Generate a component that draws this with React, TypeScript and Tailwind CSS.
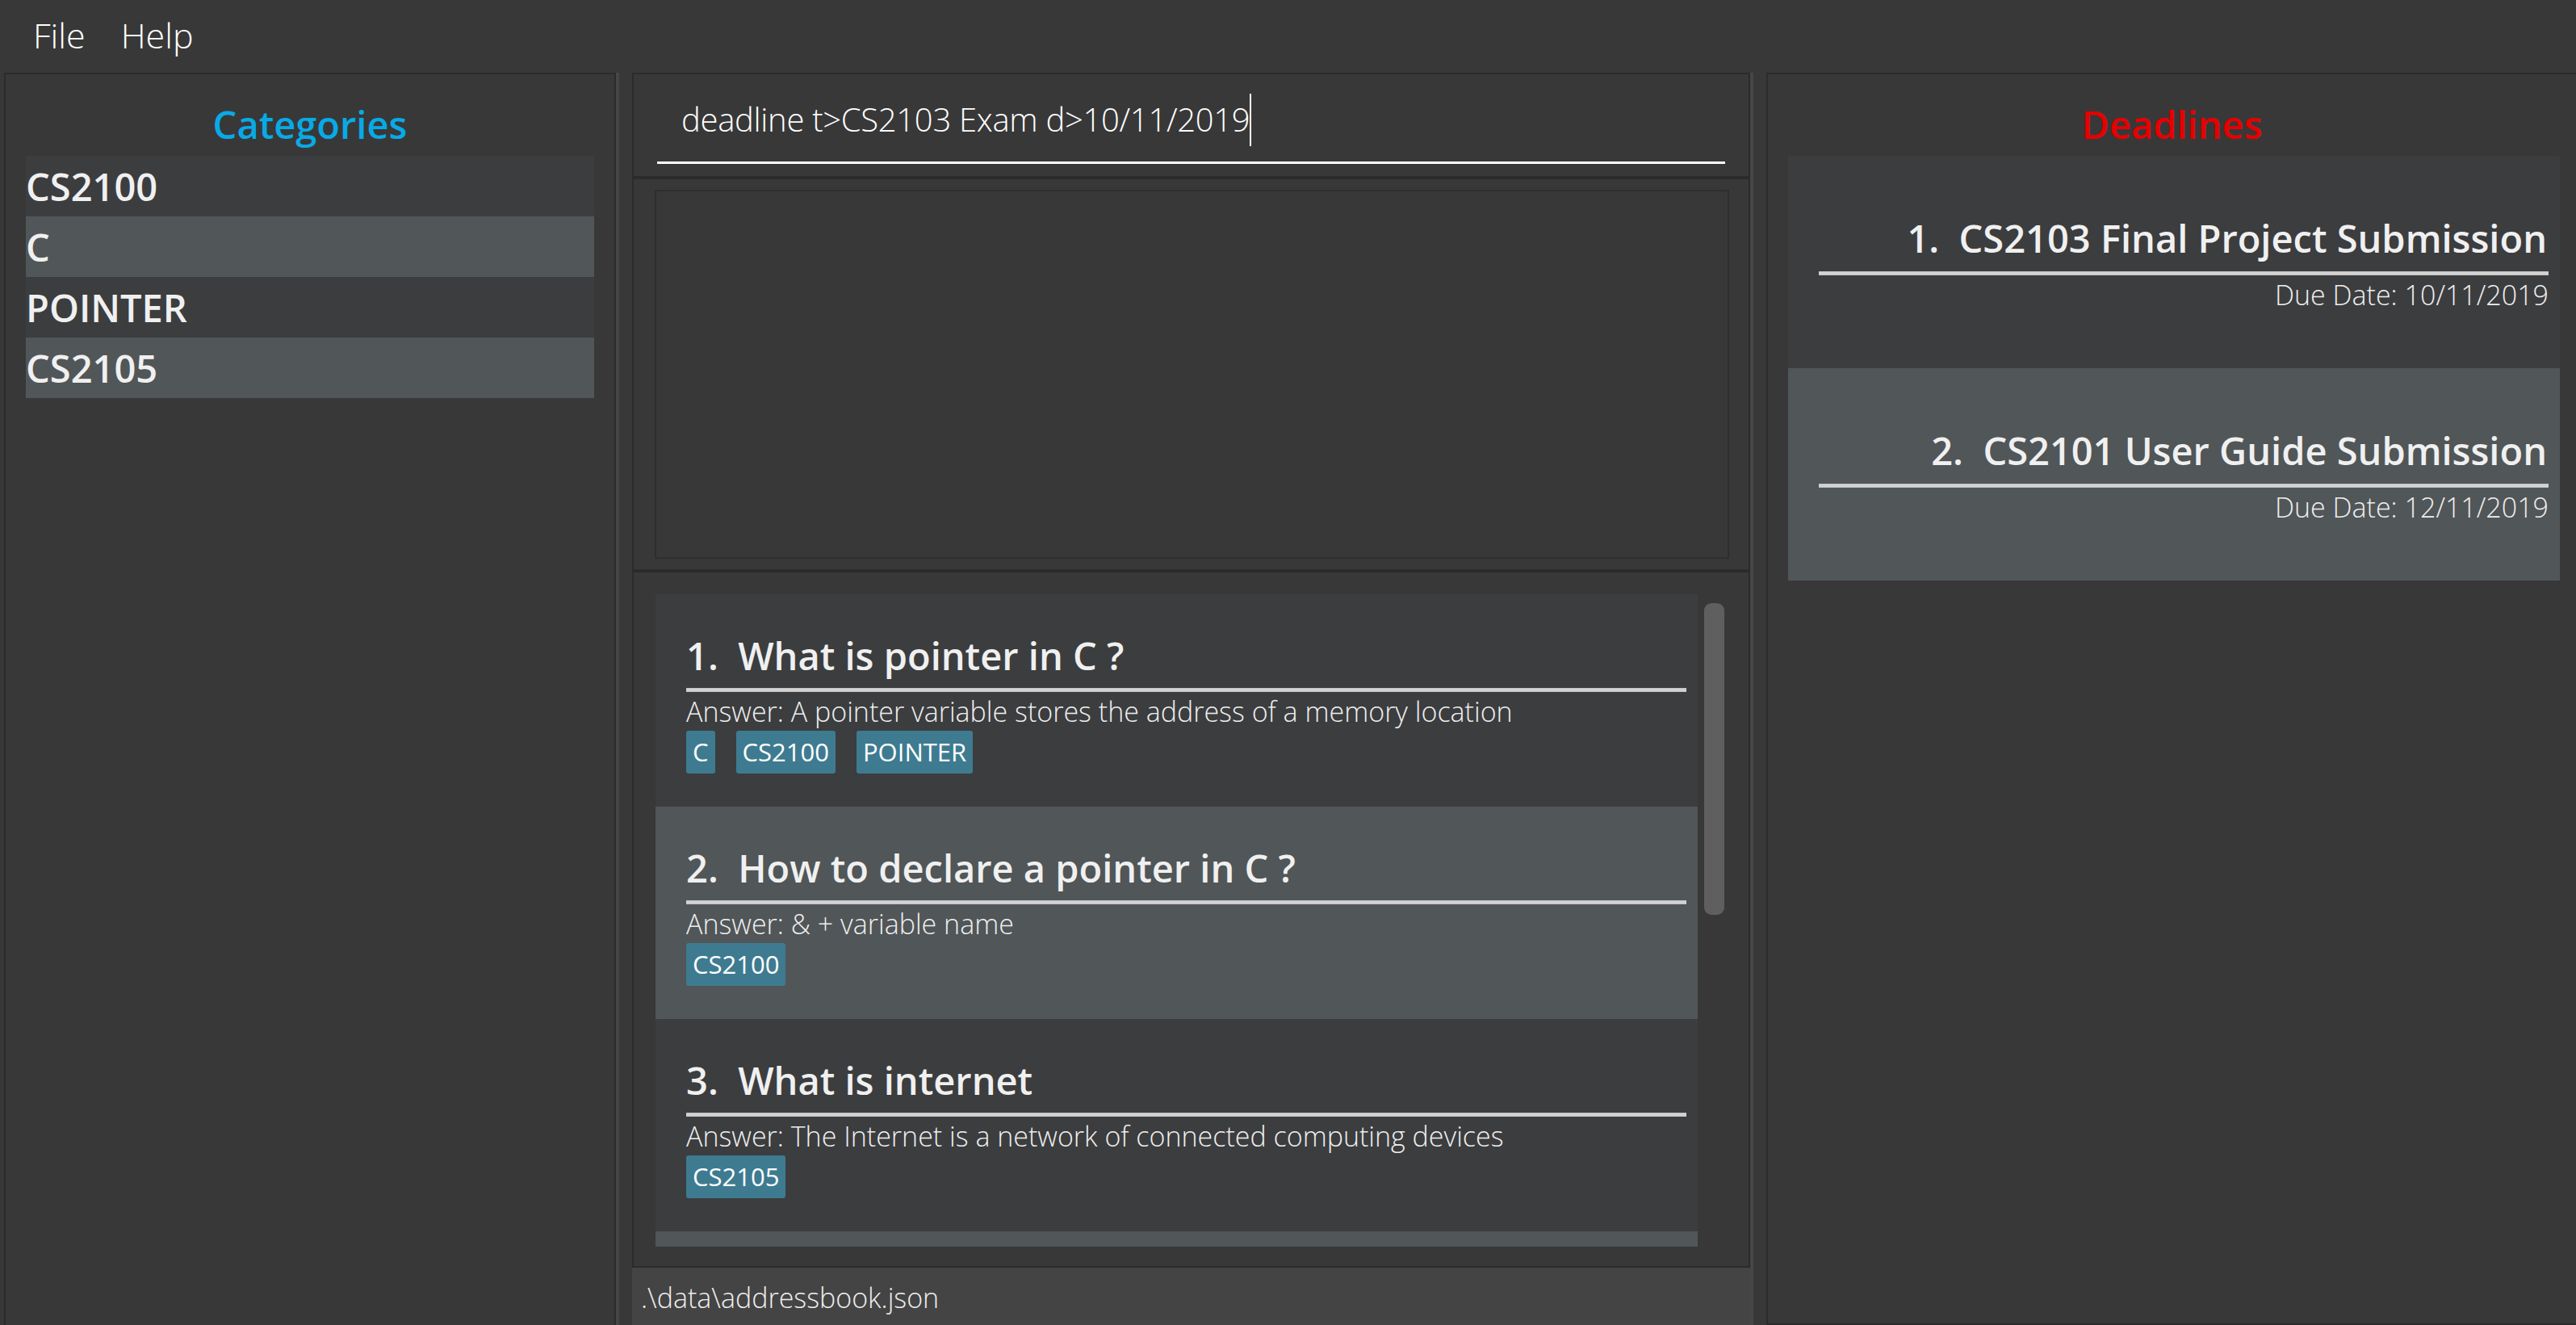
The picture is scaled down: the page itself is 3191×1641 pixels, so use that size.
const categories = ["CS2100", "C", "POINTER", "CS2105"]

const flashcards = [
  {
    question: "What is pointer in C ?",
    answer: "A pointer variable stores the address of a memory location",
    tags: ["C", "CS2100", "POINTER"],
  },
  {
    question: "How to declare a pointer in C ?",
    answer: "& + variable name",
    tags: ["CS2100"],
  },
  {
    question: "What is internet",
    answer: "The Internet is a network of connected computing devices",
    tags: ["CS2105"],
  },
]

const deadlines = [
  { title: "CS2103 Final Project Submission", due: "10/11/2019" },
  { title: "CS2101 User Guide Submission", due: "12/11/2019" },
]

function Rule() {
  // double light line under card titles
  return <div className="h-[5px] bg-[#d2d2d2] border-y border-[#c4c4c4]" />
}

function FlashcardCard({ index, card }: { index: number; card: (typeof flashcards)[number] }) {
  const shade = index % 2 === 0 ? "bg-[#3c3d3f]" : "bg-[#515658]"
  return (
    <div className={`${shade} h-[263px] shrink-0 pl-[38px] pr-[14px] flex flex-col`}>
      <div className="mt-[52px] h-[48px] text-[47px] leading-[48px] font-semibold text-[#f0f0f0] whitespace-nowrap">
        {index + 1}.&nbsp;&nbsp;{card.question}
      </div>
      <div className="mt-[16px]">
        <Rule />
      </div>
      <div className="mt-[8px] h-[33px] text-[34px] leading-[33px] font-light text-[#eeeeee] whitespace-nowrap">
        Answer: {card.answer}
      </div>
      <div className="mt-[7px] flex gap-[26px]">
        {card.tags.map((t) => (
          <span
            key={t}
            className="h-[53px] px-[8px] rounded-[3px] bg-[#3e7b91] text-[31px] text-white flex items-center"
          >
            {t}
          </span>
        ))}
      </div>
    </div>
  )
}

function DeadlineCard({ index, item }: { index: number; item: (typeof deadlines)[number] }) {
  const shade = index % 2 === 0 ? "bg-[#3c3d3f]" : "bg-[#515658]"
  return (
    <div className={`${shade} h-[263px] pl-[38px] pr-[14px] flex flex-col text-right`}>
      <div className="mt-[78px] h-[48px] pr-[2px] text-[47px] leading-[48px] font-semibold text-[#f0f0f0] whitespace-nowrap">
        {index + 1}.&nbsp;&nbsp;{item.title}
      </div>
      <div className="mt-[17px]">
        <Rule />
      </div>
      <div className="mt-[7px] h-[35px] text-[34px] leading-[35px] font-light text-[#eeeeee] whitespace-nowrap">
        Due Date: {item.due}
      </div>
    </div>
  )
}

export default function App() {
  return (
    <div
      className="w-[3191px] h-[1641px] bg-[#383838] flex flex-col overflow-hidden text-white"
      style={{ fontFamily: '"Open Sans", "Noto Sans", sans-serif' }}
    >
      {/* menu bar */}
      <div className="h-[90px] shrink-0 flex items-center pl-[41px] gap-[44px] pb-[2px] text-[43px] font-light text-white">
        <span>File</span>
        <span>Help</span>
      </div>

      <div className="flex-1 min-h-0 flex pl-[5px]">
        {/* categories */}
        <div className="w-[758px] shrink-0 border-2 border-b-0 border-[#2b2b2b] flex flex-col">
          <div className="h-[101px] pt-[23px] flex items-center justify-center text-[47px] leading-[50px] font-semibold text-[#08aae6]">
            Categories
          </div>
          <div className="px-[25px] flex flex-col">
            {categories.map((c, i) => (
              <div
                key={c}
                className={`${i % 2 === 0 ? "bg-[#3c3d3f]" : "bg-[#515658]"} h-[75px] flex items-center text-[47px] leading-[48px] font-semibold text-[#f0f0f0]`}
              >
                {c}
              </div>
            ))}
          </div>
        </div>
        <div className="w-[4px] shrink-0 bg-[#464646]" />

        {/* centre column */}
        <div className="ml-[16px] w-[1385px] shrink-0 flex flex-col">
          <div className="h-[130px] shrink-0 border-2 border-[#2b2b2b] px-[29px] flex flex-col">
            <div className="h-[111px] border-b-[3px] border-white flex items-center pl-[30px] pt-[4px]">
              <span className="text-[40px] leading-[44px] tracking-[-0.3px] font-light text-white whitespace-nowrap">
                deadline t&gt;CS2103 Exam d&gt;10/11/2019
              </span>
              <span className="w-[2px] h-[65px] bg-white" />
            </div>
          </div>

          <div className="h-[487px] shrink-0 border-2 border-[#2b2b2b] pl-[26px] pr-[24px] py-[13px]">
            <div className="h-full border-2 border-[#2e2e2e] bg-[#383838]" />
          </div>

          <div className="h-[863px] shrink-0 border-2 border-[#2b2b2b] pl-[27px] pt-[27px] pb-[24px] flex overflow-hidden">
            <div className="w-[1291px] shrink-0 flex flex-col overflow-hidden">
              {flashcards.map((card, i) => (
                <FlashcardCard key={card.question} index={i} card={card} />
              ))}
              {/* next card, scrolled out of view */}
              <div className="h-[263px] shrink-0 bg-[#515658]" />
            </div>
            <div className="ml-[8px] w-[25px] shrink-0 pt-[11px]">
              <div className="h-[386px] rounded-[9px] bg-[#5f5f5f]" />
            </div>
          </div>

          <div className="flex-1 bg-[#444444] flex items-center pl-[11px] pt-[4px] text-[34px] font-light text-[#eeeeee]">
            .\data\addressbook.json
          </div>
        </div>
        <div className="w-[4px] shrink-0 bg-[#464646]" />

        {/* deadlines */}
        <div className="ml-[16px] flex-1 border-2 border-r-0 border-[#2b2b2b] flex flex-col">
          <div className="h-[101px] pt-[23px] flex items-center justify-center text-[47px] leading-[50px] font-semibold text-[#e60000]">
            Deadlines
          </div>
          <div className="pl-[25px] pr-[20px] flex flex-col">
            {deadlines.map((d, i) => (
              <DeadlineCard key={d.title} index={i} item={d} />
            ))}
          </div>
        </div>
      </div>
    </div>
  )
}
